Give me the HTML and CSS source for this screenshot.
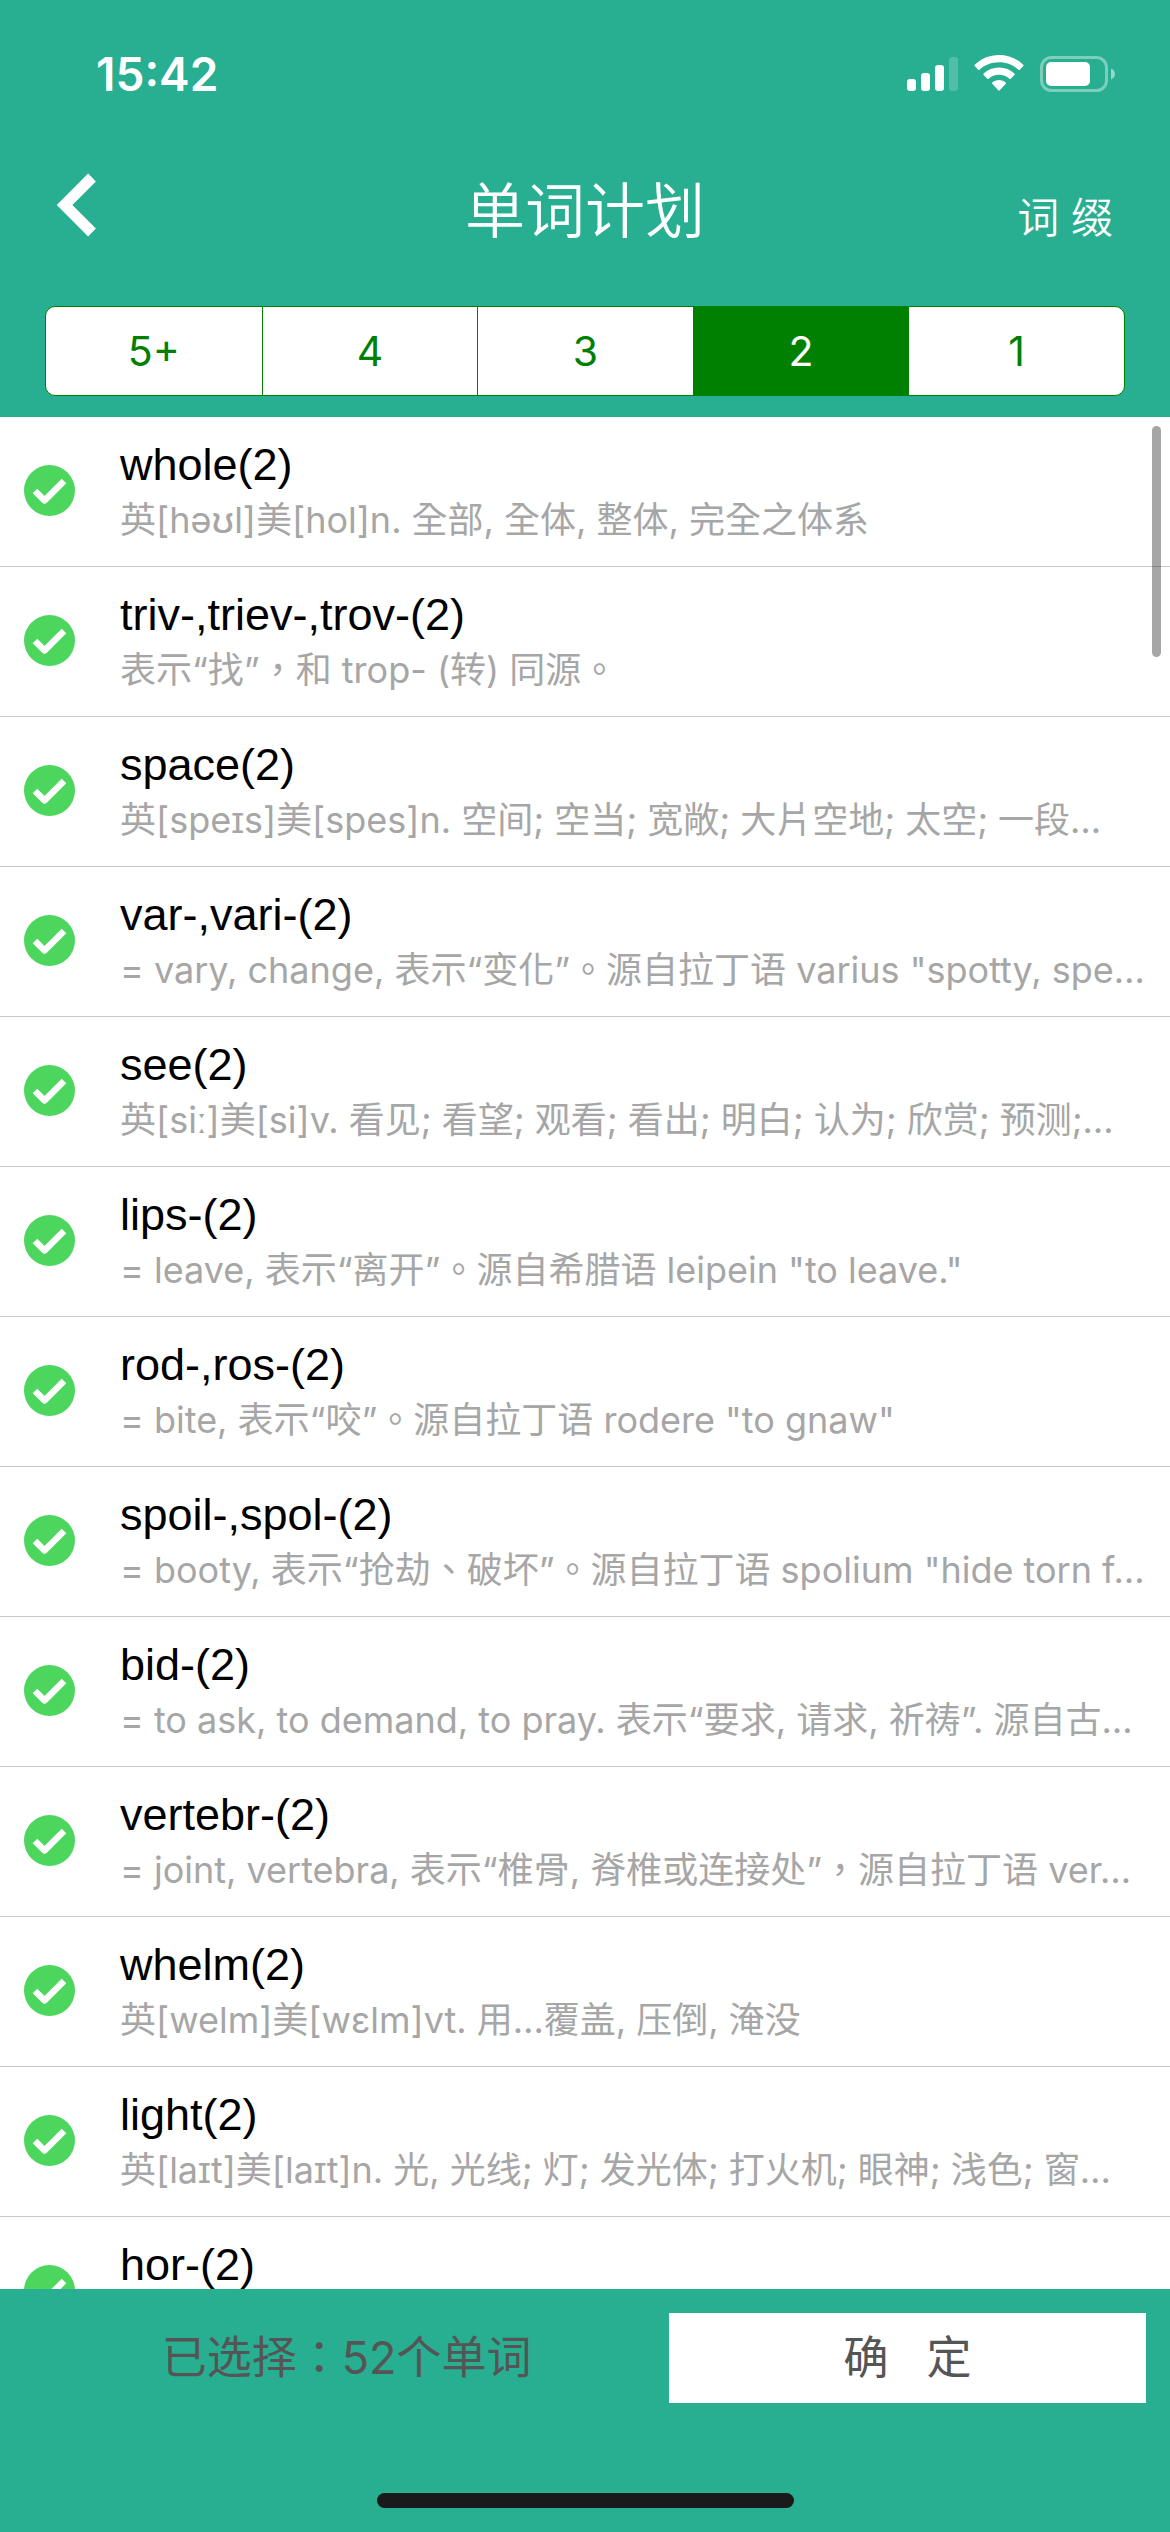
FILE: index.html
```html
<!DOCTYPE html>
<html lang="zh-Hant">
<head>
<meta charset="utf-8">
<meta name="viewport" content="width=device-width, initial-scale=1">
<title>单词计划</title>
<link rel="stylesheet" href="styles.css">
</head>
<body>
<header class="header">
  <div class="status">
    <time class="clock">15:42</time>
    <div class="indicators">
      <svg width="51" height="38" viewBox="0 0 51 38" fill="#fff" aria-hidden="true">
        <rect x="0" y="24" width="9" height="12" rx="3"/>
        <rect x="14" y="18" width="9" height="18" rx="3"/>
        <rect x="28" y="10" width="9" height="26" rx="3"/>
        <rect x="42" y="2" width="9" height="34" rx="3" opacity=".2"/>
      </svg>
      <svg width="50" height="38" viewBox="0 0 50 38" fill="#fff" aria-hidden="true">
        <path d="M25 0C15.500 0 7 3.700.7 9.800c-.4.400-.4.900 0 1.300l3.500 3.600c.4.400.9.400 1.300 0C10.700 9.900 17.500 7.200 25 7.200s14.300 2.700 19.500 7.500c.4.400.9.400 1.300 0l3.500-3.600c.4-.4.4-.9 0-1.300C43 3.700 34.500 0 25 0z"/>
        <path d="M25 12.600c-6 0-11.300 2.300-15.400 6-.4.400-.4.900 0 1.300l3.700 3.800c.4.400.9.400 1.300 0 2.800-2.500 6.400-4 10.400-4s7.600 1.500 10.400 4c.4.400.9.400 1.300 0l3.700-3.800c.4-.4.4-.9 0-1.300-4.100-3.700-9.400-6-15.400-6z"/>
        <path d="M25 25c-2.600 0-5 .9-6.800 2.500-.4.400-.4.900 0 1.300l6.100 6.500c.4.500 1 .5 1.400 0l6.100-6.500c.4-.4.400-.9 0-1.300C30 25.900 27.600 25 25 25z"/>
      </svg>
      <svg width="75" height="38" viewBox="0 0 75 38" aria-hidden="true">
        <rect x="1.500" y="2.500" width="65" height="33" rx="10" fill="none" stroke="#fff" stroke-width="3" opacity=".4"/>
        <rect x="6" y="7" width="44" height="24" rx="5" fill="#fff"/>
        <path d="M71 13.500c2.600 1 4 3.200 4 5.500s-1.400 4.500-4 5.500z" fill="#fff" opacity=".5"/>
      </svg>
    </div>
  </div>
  <nav class="navbar">
    <button class="back" type="button" aria-label="返回">
      <svg width="40" height="64" viewBox="0 0 40 64" aria-hidden="true">
        <path d="M35 4.500L7.500 32 35 59.500" fill="none" stroke="#fff" stroke-width="11"/>
      </svg>
    </button>
    <h1 class="title">单词计划</h1>
    <a class="affix" href="#affix">词 缀</a>
  </nav>
  <div class="segments">
    <button class="segment" type="button">5+</button>
    <button class="segment" type="button">4</button>
    <button class="segment" type="button">3</button>
    <button class="segment segment-active" type="button" aria-pressed="true">2</button>
    <button class="segment" type="button">1</button>
  </div>
</header>

<main class="content">
  <div class="scroller">
    <label class="row"><input class="check" type="checkbox" checked><span class="entry"><span class="word">whole(2)</span><span class="meaning">英[həʊl]美[hol]n. 全部, 全体, 整体, 完全之体系</span></span></label>
    <label class="row"><input class="check" type="checkbox" checked><span class="entry"><span class="word">triv-,triev-,trov-(2)</span><span class="meaning">表示“找”，和 trop- (转) 同源。</span></span></label>
    <label class="row"><input class="check" type="checkbox" checked><span class="entry"><span class="word">space(2)</span><span class="meaning">英[speɪs]美[spes]n. 空间; 空当; 宽敞; 大片空地; 太空; 一段…</span></span></label>
    <label class="row"><input class="check" type="checkbox" checked><span class="entry"><span class="word">var-,vari-(2)</span><span class="meaning">= vary, change, 表示“变化”。源自拉丁语 varius "spotty, spe…</span></span></label>
    <label class="row"><input class="check" type="checkbox" checked><span class="entry"><span class="word">see(2)</span><span class="meaning">英[siː]美[si]v. 看见; 看望; 观看; 看出; 明白; 认为; 欣赏; 预测;…</span></span></label>
    <label class="row"><input class="check" type="checkbox" checked><span class="entry"><span class="word">lips-(2)</span><span class="meaning">= leave, 表示“离开”。源自希腊语 leipein "to leave."</span></span></label>
    <label class="row"><input class="check" type="checkbox" checked><span class="entry"><span class="word">rod-,ros-(2)</span><span class="meaning">= bite, 表示“咬”。源自拉丁语 rodere "to gnaw"</span></span></label>
    <label class="row"><input class="check" type="checkbox" checked><span class="entry"><span class="word">spoil-,spol-(2)</span><span class="meaning">= booty, 表示“抢劫、破坏”。源自拉丁语 spolium "hide torn f…</span></span></label>
    <label class="row"><input class="check" type="checkbox" checked><span class="entry"><span class="word">bid-(2)</span><span class="meaning">= to ask, to demand, to pray. 表示“要求, 请求, 祈祷”. 源自古…</span></span></label>
    <label class="row"><input class="check" type="checkbox" checked><span class="entry"><span class="word">vertebr-(2)</span><span class="meaning">= joint, vertebra, 表示“椎骨, 脊椎或连接处”，源自拉丁语 ver…</span></span></label>
    <label class="row"><input class="check" type="checkbox" checked><span class="entry"><span class="word">whelm(2)</span><span class="meaning">英[welm]美[wɛlm]vt. 用…覆盖, 压倒, 淹没</span></span></label>
    <label class="row"><input class="check" type="checkbox" checked><span class="entry"><span class="word">light(2)</span><span class="meaning">英[laɪt]美[laɪt]n. 光, 光线; 灯; 发光体; 打火机; 眼神; 浅色; 窗…</span></span></label>
    <label class="row"><input class="check" type="checkbox" checked><span class="entry"><span class="word">hor-(2)</span></span></label>
  </div>
  <div class="scroll-thumb"></div>
</main>

<footer class="footer">
  <div class="actions">
    <p class="count">已选择：52个单词</p>
    <button class="confirm" type="button">确&nbsp;&nbsp;&nbsp;定</button>
  </div>
  <div class="home-bar"></div>
</footer>
</body>
</html>
```
FILE: styles.css
```css
* {
  box-sizing: border-box;
}

body {
  display: flex;
  flex-direction: column;
  height: 100vh;
  margin: 0;
  background: #28ae91;
  font-family: Inter, "Noto Sans CJK TC", sans-serif;
}

button {
  margin: 0;
  padding: 0;
  border: 0;
  background: none;
  font: inherit;
  cursor: pointer;
}

.header {
  padding-bottom: 21px;
}

.status {
  display: flex;
  align-items: center;
  justify-content: space-between;
  height: 148px;
  padding: 0 55px 0 96px;
}

.clock {
  color: #fff;
  font-size: 46px;
  font-weight: 600;
}

.indicators {
  display: flex;
  gap: 16px;
}

.navbar {
  display: grid;
  grid-template-columns: 1fr auto 1fr;
  align-items: baseline;
  height: 158px;
  padding: 20px 57px 0;
}

.back {
  align-self: start;
  justify-self: start;
  height: 74px;
}

.back svg {
  display: block;
}

.title {
  margin: 0;
  color: #fff;
  font-size: 60px;
  font-weight: 350;
  line-height: 86px;
}

.affix {
  justify-self: end;
  color: #fff;
  font-size: 42px;
  font-weight: 350;
  text-decoration: none;
}

.segments {
  display: grid;
  grid-template-columns: repeat(5, 1fr);
  height: 90px;
  margin: 0 45px;
  overflow: hidden;
  border: 1px solid #008000;
  border-radius: 10px;
  background: #fff;
}

.segment {
  color: #008000;
  font-size: 41px;
}

.segment + .segment {
  border-left: 1px solid #008000;
}

.segment-active {
  background: #008000;
  color: #fff;
}

.content {
  position: relative;
  flex: 1;
  min-height: 0;
  background: #fff;
}

.scroller {
  height: 100%;
  overflow-y: auto;
  scrollbar-width: none;
}

.scroll-thumb {
  position: absolute;
  top: 9px;
  right: 9px;
  width: 9px;
  height: 231px;
  border-radius: 5px;
  background: rgba(0, 0, 0, 0.35);
}

.row {
  display: flex;
  align-items: flex-start;
  gap: 45px;
  height: 150px;
  padding: 0 12px 0 24px;
  border-bottom: 1px solid #c8c7cc;
}

.check {
  flex: none;
  width: 51px;
  height: 51px;
  margin: 48px 0 0;
  border: 2px solid #c8c7cc;
  border-radius: 50%;
  appearance: none;
}

.check:checked {
  border: 0;
  background: #4cd65e url("data:image/svg+xml,%3Csvg xmlns='http://www.w3.org/2000/svg' viewBox='0 0 51 51'%3E%3Cpath d='M11 26L20.500 35.500 40 16' fill='none' stroke='%23fff' stroke-width='6.500' stroke-linejoin='round'/%3E%3C/svg%3E") center / contain;
}

.entry {
  display: flex;
  flex: 1;
  flex-direction: column;
  min-width: 0;
  padding-top: 23px;
}

.word {
  color: #000;
  font-family: "Liberation Sans", Arial, sans-serif;
  font-size: 45px;
  line-height: 50px;
}

.meaning {
  overflow: hidden;
  color: #a6a6a6;
  font-size: 36px;
  font-weight: 400;
  line-height: 60px;
  text-overflow: ellipsis;
  white-space: nowrap;
}

.footer {
  padding: 24px 24px;
}

.actions {
  display: flex;
  align-items: center;
  margin-bottom: 90px;
}

.count {
  flex: 23;
  margin: 0;
  padding-bottom: 8px;
  color: #555;
  font-size: 45px;
  font-weight: 400;
  text-align: center;
}

.confirm {
  flex: 17;
  height: 90px;
  padding-bottom: 8px;
  background: #fff;
  color: #555;
  font-size: 45px;
  font-weight: 400;
}

.home-bar {
  width: 417px;
  max-width: 50%;
  height: 15px;
  margin: 0 auto;
  border-radius: 8px;
  background: #1a1a1a;
}
```
